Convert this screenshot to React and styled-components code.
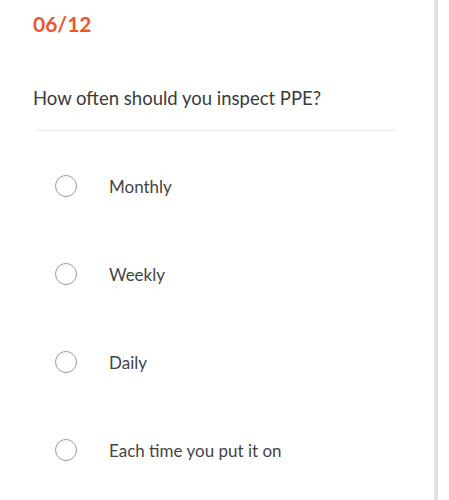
import styled, { createGlobalStyle } from "styled-components";

const Global = createGlobalStyle`
  html, body {
    margin: 0;
    padding: 0;
    background: #ffffff;
  }
  body {
    font-family: Lato, "Noto Sans", sans-serif;
  }
`;

const Page = styled.div`
  display: flex;
  width: 449px;
  height: 500px;
  overflow: hidden;
`;

const Main = styled.main`
  flex: 0 0 434px;
  padding: 10px 0 0 33px;
  box-sizing: border-box;
`;

const Edge = styled.div`
  flex: 0 0 4px;
  background: linear-gradient(to right, #e6e6e6, #dcdcdc);
`;

const Counter = styled.h2`
  margin: 0;
  font-size: 21px;
  font-weight: 700;
  color: #e9572b;
  line-height: 28px;
`;

const Question = styled.h1`
  margin: 47px 0 0;
  font-size: 18.5px;
  font-weight: 400;
  color: #3a3a3a;
  line-height: 26px;
`;

const Divider = styled.hr`
  margin: 19px 0 0 3px;
  width: 360px;
  border: none;
  border-top: 1px solid #ececec;
`;

const Options = styled.ul`
  list-style: none;
  margin: 42px 0 0;
  padding: 0;
  display: flex;
  flex-direction: column;
  gap: 62px;
`;

const Option = styled.li`
  display: flex;
  align-items: center;
  height: 26px;
  padding-left: 22px;
`;

const Radio = styled.span`
  width: 22px;
  height: 22px;
  border: 1px solid #9a9a9a;
  border-radius: 50%;
  box-sizing: border-box;
  flex: 0 0 auto;
`;

const Label = styled.span`
  margin-left: 32px;
  font-size: 17px;
  color: #444444;
`;

const answers = ["Monthly", "Weekly", "Daily", "Each time you put it on"];

export default function App() {
  return (
    <>
      <Global />
      <Page>
        <Main>
          <Counter>06/12</Counter>
          <Question>How often should you inspect PPE?</Question>
          <Divider />
          <Options>
            {answers.map((a) => (
              <Option key={a}>
                <Radio />
                <Label>{a}</Label>
              </Option>
            ))}
          </Options>
        </Main>
        <Edge />
      </Page>
    </>
  );
}
